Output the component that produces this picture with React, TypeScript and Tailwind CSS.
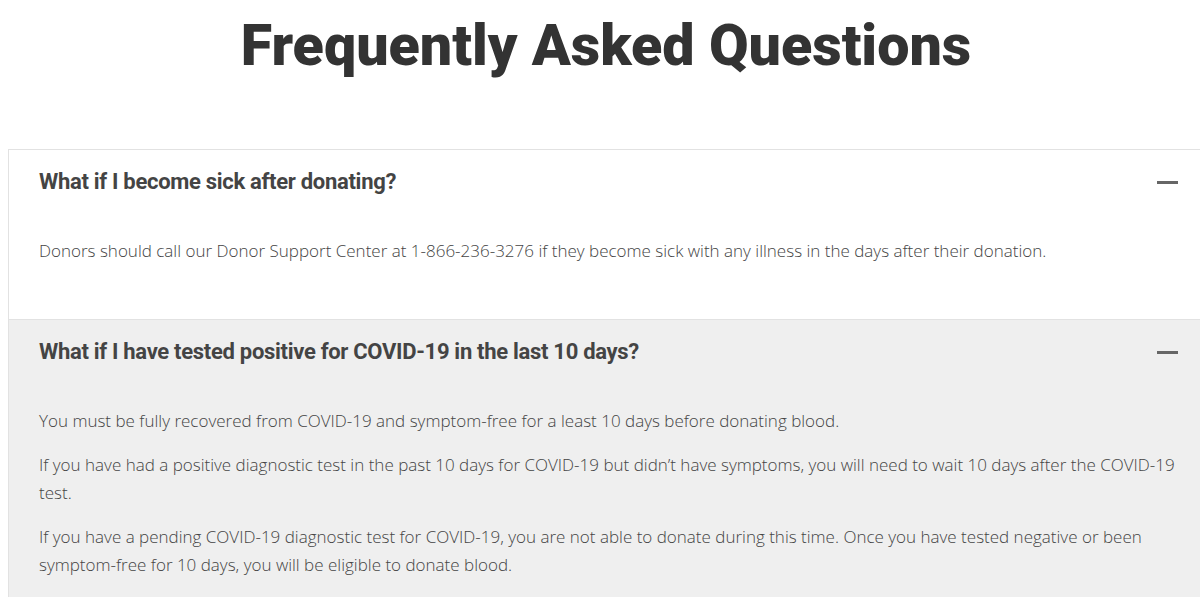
const faqs = [
  {
    q: "What if I become sick after donating?",
    a: [
      "Donors should call our Donor Support Center at 1-866-236-3276 if they become sick with any illness in the days after their donation.",
    ],
    shaded: false,
  },
  {
    q: "What if I have tested positive for COVID-19 in the last 10 days?",
    a: [
      "You must be fully recovered from COVID-19 and symptom-free for a least 10 days before donating blood.",
      "If you have had a positive diagnostic test in the past 10 days for COVID-19 but didn’t have symptoms, you will need to wait 10 days after the COVID-19 test.",
      "If you have a pending COVID-19 diagnostic test for COVID-19, you are not able to donate during this time. Once you have tested negative or been symptom-free for 10 days, you will be eligible to donate blood.",
    ],
    shaded: true,
  },
];

function FaqItem({ q, a, shaded }: { q: string; a: string[]; shaded: boolean }) {
  return (
    <div className={`border-t border-[#e2e2e2] ${shaded ? "bg-[#efefef]" : "bg-white"}`}>
      <div className="flex items-center justify-between pl-[30px] pr-[22px] pt-[19px] pb-[42px]">
        <h3 className="font-['Roboto',sans-serif] text-[22px] font-bold leading-[26px] tracking-[-0.3px] text-[#444]">
          {q}
        </h3>
        <span className="block h-[3px] w-[21px] bg-[#666]" />
      </div>
      <div className="pl-[30px] pr-[20px] pb-[38px]">
        {a.map((p) => (
          <p
            key={p}
            className="mb-4 font-['Open_Sans',sans-serif] text-[17px] font-light leading-[28px] text-[#444]"
          >
            {p}
          </p>
        ))}
      </div>
    </div>
  );
}

export default function App() {
  return (
    <div className="min-h-screen bg-white">
      <h1 className="pl-3 pt-[14px] text-center font-['Roboto',sans-serif] text-[57.4px] font-black leading-[64px] text-[#333]">
        Frequently Asked Questions
      </h1>
      <div className="ml-2 mt-[71px] border-l border-[#e2e2e2]">
        {faqs.map((f) => (
          <FaqItem key={f.q} {...f} />
        ))}
      </div>
    </div>
  );
}
